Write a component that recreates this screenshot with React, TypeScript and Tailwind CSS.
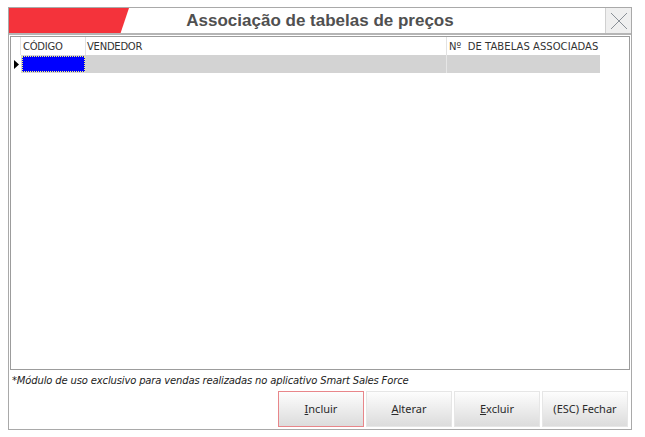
import React from "react";

const buttons = [
  { key: "I", rest: "ncluir", active: true },
  { key: "A", rest: "lterar" },
  { key: "E", rest: "xcluir" },
  { key: "", rest: "(ESC) Fechar" },
];

const App = () => {
  return (
    <div className="w-[645px] h-[437px] bg-white pt-[7px] pl-[8px] font-['Liberation_Sans',sans-serif]">
      <div className="w-[624px] h-[423px] border border-[#a9a9a9] flex flex-col bg-white">
        {/* title bar */}
        <div className="relative h-[27px] flex items-center justify-center border-b-2 border-[#b5b5b5]">
          <div className="absolute left-0 top-0 h-full w-[120px] bg-[#f4333b] [clip-path:polygon(0_0,100%_0,93%_100%,0_100%)]" />
          <div className="text-[17px] font-bold text-[#505050]">Associação de tabelas de preços</div>
          <div className="absolute right-0 top-0 w-[26px] h-full bg-[#efefef] border-l border-[#d0d0d0] flex items-center justify-center">
            <svg width="18" height="18" viewBox="0 0 18 18">
              <path d="M1 1 L17 17 M17 1 L1 17" stroke="#8a9097" strokeWidth="1" fill="none" />
            </svg>
          </div>
        </div>

        <div className="flex-1 flex flex-col px-[1px]">
          {/* grid */}
          <div className="mt-[1px] h-[334px] border border-[#9c9c9c] text-[10px] text-[#333] font-['DejaVu_Sans',sans-serif] tracking-[-0.25px]">
            <div className="flex h-[18px] items-center">
              <div className="w-[10px] h-full border-r border-[#e2e2e2]" />
              <div className="w-[65px] h-full pl-[2px] flex items-center border-r border-[#e2e2e2]">CÓDIGO</div>
              <div className="w-[361px] h-full pl-[1px] flex items-center border-r border-[#e2e2e2]">VENDEDOR</div>
              <div className="w-[153px] h-full pl-[2px] flex items-center tracking-[0.05px]">Nº&nbsp; DE TABELAS ASSOCIADAS</div>
            </div>
            <div className="flex h-[18px]">
              <div className="w-[10px] h-full flex items-center justify-center">
                <svg width="5" height="9" viewBox="0 0 5 9">
                  <path d="M0 0 L5 4.5 L0 9 Z" fill="#000" />
                </svg>
              </div>
              <div className="w-[65px] h-full bg-[#d3d3d3] p-[1px]">
                <div className="w-full h-full bg-[#0000ff] border border-dotted border-[#ffff66]" />
              </div>
              <div className="w-[361px] h-full bg-[#d3d3d3] border-r border-[#e6e6e6]" />
              <div className="w-[153px] h-full bg-[#d3d3d3]" />
            </div>
          </div>

          {/* footnote */}
          <div className="mt-[3px] pl-[2px] text-[10px] italic text-[#222] font-['DejaVu_Sans',sans-serif] tracking-[-0.15px]">
            *Módulo de uso exclusivo para vendas realizadas no aplicativo Smart Sales Force
          </div>

          {/* buttons */}
          <div className="mt-auto mb-[2px] flex justify-end gap-[2px] pr-[2px]">
            {buttons.map((b) => (
              <button
                key={b.rest}
                className={`w-[86px] h-[36px] text-[11px] text-[#2a2a2a] font-['Noto_Sans',sans-serif] bg-gradient-to-b from-[#fdfdfd] to-[#dcdcdc] border ${
                  b.active ? "border-[#e8868a]" : "border-[#e6e6e6]"
                }`}
              >
                {b.key && <span className="underline">{b.key}</span>}
                {b.rest}
              </button>
            ))}
          </div>
        </div>
      </div>
    </div>
  );
};

export default App;
